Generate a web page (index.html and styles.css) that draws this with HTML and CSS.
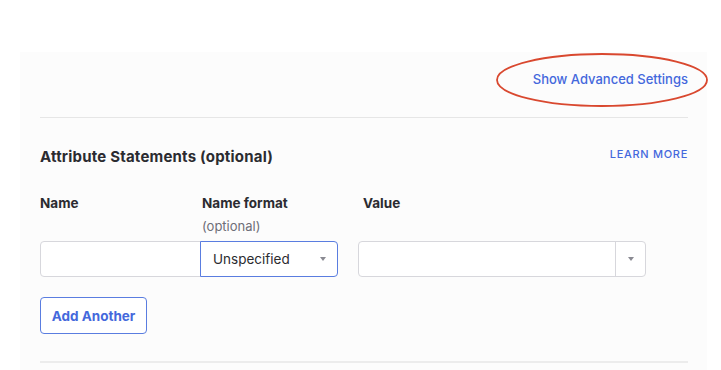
FILE: index.html
```html
<!DOCTYPE html>
<html lang="en">
<head>
<meta charset="utf-8">
<title>Attribute Statements</title>
<link rel="stylesheet" href="styles.css">
</head>
<body>
<div class="page">
  <div class="panel">
    <div class="adv-row">
      <a class="adv-link" href="#">Show Advanced Settings
        <svg class="ellipse" width="212" height="54" viewBox="0 0 212 54" aria-hidden="true">
          <ellipse cx="106" cy="27" rx="105" ry="26" fill="none" stroke="#d9482f" stroke-width="1.8"/>
        </svg>
      </a>
    </div>
    <hr class="divider">
    <div class="section-head">
      <h2 class="section-title">Attribute Statements (optional)</h2>
      <a class="learn" href="#">LEARN MORE</a>
    </div>
    <div class="grid">
      <div class="label">Name</div>
      <div class="label label-format">Name format<span class="hint">(optional)</span></div>
      <div class="label label-value">Value</div>

      <div class="input name-input"></div>
      <div class="select select-focus"><span>Unspecified</span><span class="caret"></span></div>
      <div class="combo"><div class="combo-field"></div><div class="combo-btn"><span class="caret"></span></div></div>
    </div>
    <button class="btn-add" type="button">Add Another</button>
    <hr class="divider divider-bottom">
  </div>
</div>
</body>
</html>
```

FILE: styles.css
```css
html, body {
  margin: 0;
  padding: 0;
  background: #ffffff;
  font-family: "Inter", "Liberation Sans", sans-serif;
  color: #2b2b30;
  overflow: hidden;
}

.page {
  padding: 52px 14px 0 20px;
}

.panel {
  background: #fcfcfc;
  padding: 0 19px 8px 20px;
}

.adv-row {
  display: flex;
  justify-content: flex-end;
  padding: 17px 0 28px;
}

.adv-link {
  position: relative;
  font-size: 13px;
  line-height: 20px;
  color: #4468dc;
  text-decoration: none;
  font-weight: 500;
}

.ellipse {
  position: absolute;
  left: -37px;
  top: -16px;
}

.divider {
  border: 0;
  border-top: 1px solid #e6e6e6;
  margin: 0;
}

.section-head {
  display: flex;
  justify-content: space-between;
  align-items: center;
  padding-top: 28px;
}

.section-title {
  margin: 0;
  font-size: 15px;
  line-height: 22px;
  font-weight: 700;
  letter-spacing: 0.2px;
  color: #2b2b30;
}

.learn {
  font-size: 11px;
  font-weight: 500;
  color: #4468dc;
  text-decoration: none;
  letter-spacing: 0.7px;
  margin-top: -6px;
}

.grid {
  display: grid;
  grid-template-columns: 160px 138px 308px;
  margin-top: 25px;
}

.label {
  font-size: 13.5px;
  font-weight: 700;
  line-height: 20px;
  color: #2b2b30;
}

.label-format {
  padding-left: 2px;
}

.label-value {
  padding-left: 25px;
}

.hint {
  display: block;
  font-size: 13px;
  font-weight: 400;
  color: #6e6e78;
  margin-top: 3px;
}

.grid .input,
.grid .select,
.grid .combo {
  margin-top: 5px;
  height: 36px;
  box-sizing: border-box;
}

.input {
  border: 1px solid #d7d7dc;
  border-radius: 4px 0 0 4px;
  background: #fff;
  margin-right: -1px;
}

.select {
  display: flex;
  align-items: center;
  justify-content: space-between;
  border: 1px solid #5a7de0;
  border-radius: 0 4px 4px 0;
  background: #fff;
  padding: 0 11px 0 12px;
  font-size: 13.5px;
  color: #2b2b30;
}

.caret {
  width: 0;
  height: 0;
  border-left: 3px solid transparent;
  border-right: 3px solid transparent;
  border-top: 4px solid #8a8a92;
}

.combo {
  display: flex;
  margin-left: 20px;
  border: 1px solid #d7d7dc;
  border-radius: 4px;
  background: #fff;
}

.combo-field {
  flex: 1;
}

.combo-btn {
  width: 29px;
  border-left: 1px solid #d7d7dc;
  display: flex;
  align-items: center;
  justify-content: center;
}

.btn-add {
  display: block;
  margin-top: 20px;
  height: 37px;
  width: 107px;
  background: #fff;
  border: 1px solid #5a7de0;
  border-radius: 4px;
  font-family: inherit;
  font-size: 13.5px;
  font-weight: 700;
  color: #4468dc;
  padding: 0;
}

.divider-bottom {
  margin-top: 27px;
  border-top: 2px solid #ececec;
}
```
